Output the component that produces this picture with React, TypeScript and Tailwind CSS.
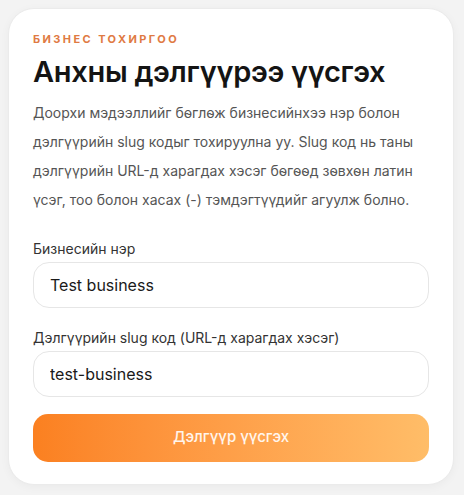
import { useState } from 'react';

export default function App() {
  const [name, setName] = useState('Test business');
  const [slug, setSlug] = useState('test-business');

  return (
    <div className="min-h-screen bg-[#f3f3f3] p-2 font-['Inter',sans-serif]">
      <div className="w-[446px] rounded-[26px] border border-[#ebebeb] bg-white px-6 pt-[22px] pb-[22px] shadow-[0_2px_10px_rgba(0,0,0,0.04)]">
        {/* Header */}
        <div className="text-[11px] font-bold uppercase tracking-[0.22em] text-[#df7a43]">
          Бизнес тохиргоо
        </div>
        <h1 className="mt-[6px] text-[29px] leading-[36px] font-semibold tracking-[-0.01em] text-[#141414]">
          Анхны дэлгүүрээ үүсгэх
        </h1>
        <p className="mt-[8px] text-[14px] leading-[29px] text-[#555]">
          Доорхи мэдээллийг бөглөж бизнесийнхээ нэр болон дэлгүүрийн slug кодыг тохируулна уу. Slug код нь таны
          дэлгүүрийн URL-д харагдах хэсэг бөгөөд зөвхөн латин үсэг, тоо болон хасах (-) тэмдэгтүүдийг агуулж болно.
        </p>

        {/* Form */}
        <div className="mt-[25px] flex flex-col gap-[20px]">
          <label className="flex flex-col gap-[3px]">
            <span className="text-[14px] leading-[20px] text-[#333]">Бизнесийн нэр</span>
            <input
              value={name}
              onChange={(e) => setName(e.target.value)}
              className="h-[46px] rounded-[16px] border border-[#e6e6e6] bg-white px-4 text-[16px] text-[#1a1a1a] outline-none"
            />
          </label>
          <label className="flex flex-col gap-[3px]">
            <span className="text-[14px] leading-[20px] text-[#333]">Дэлгүүрийн slug код (URL-д харагдах хэсэг)</span>
            <input
              value={slug}
              onChange={(e) => setSlug(e.target.value)}
              className="h-[46px] rounded-[16px] border border-[#e6e6e6] bg-white px-4 text-[16px] text-[#1a1a1a] outline-none"
            />
          </label>
        </div>

        <button className="mt-[17px] h-[48px] w-full rounded-[15px] bg-gradient-to-r from-[#fb8020] to-[#ffbd68] text-[15px] font-medium text-white/90">
          Дэлгүүр үүсгэх
        </button>
      </div>
    </div>
  );
}
